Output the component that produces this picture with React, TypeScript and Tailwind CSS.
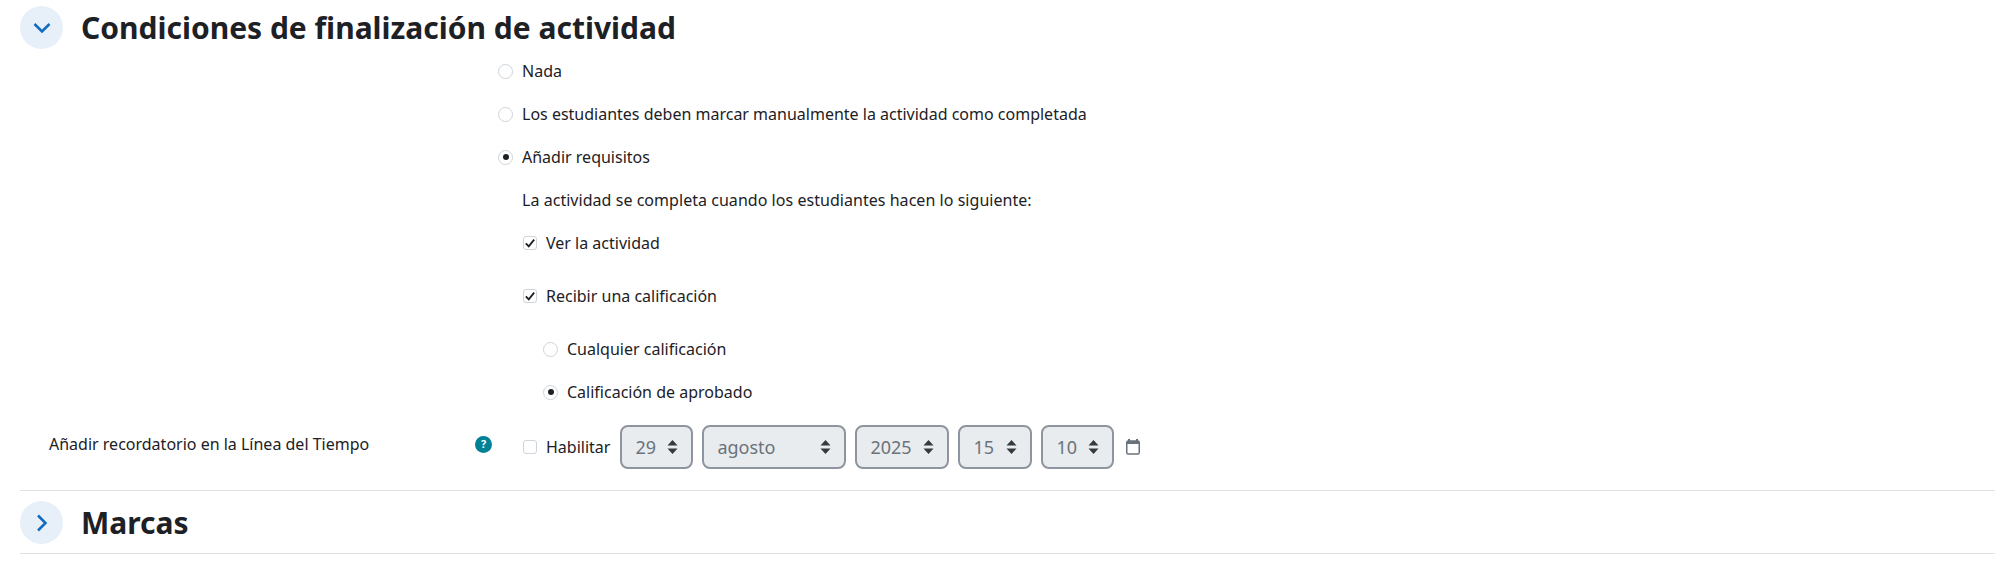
function Radio({ checked, label }: { checked?: boolean; label: string }) {
  return (
    <div className="flex items-center h-6 mb-[19px]">
      <span className="flex items-center justify-center w-[15px] h-[15px] rounded-full bg-white border border-[#ced4da] mr-[9px] shrink-0">
        {checked && <span className="w-[6px] h-[6px] rounded-full bg-[#1d2125]" />}
      </span>
      <span>{label}</span>
    </div>
  );
}

function Check({ checked, label, className }: { checked?: boolean; label: string; className?: string }) {
  return (
    <div className={"flex items-center h-6 " + (className ?? "")}>
      <span className="flex items-center justify-center w-[14px] h-[14px] rounded-[3px] bg-white border border-[#ced4da] mr-[9px] shrink-0">
        {checked && (
          <svg viewBox="0 0 12 12" className="w-[10px] h-[10px]" fill="none" stroke="#1d2125" strokeWidth="2.2">
            <path d="M1 6.5 L4.5 10 L11 2" />
          </svg>
        )}
      </span>
      <span>{label}</span>
    </div>
  );
}

function Select({ value, width }: { value: string; width: string }) {
  return (
    <div className={"flex items-center justify-between h-[44px] rounded-lg border-2 border-[#8f959e] bg-[#e9ecef] text-[#6a737b] pl-[13px] pr-[13px] text-[18px] " + width}>
      <span>{value}</span>
      <svg viewBox="0 0 10 14" className="w-[11px] h-[14px]" fill="#343a40">
        <path d="M5 0 L10 5.5 L0 5.5 Z M0 8.5 L10 8.5 L5 14 Z" />
      </svg>
    </div>
  );
}

function Section({ open, title }: { open?: boolean; title: string }) {
  return (
    <div className="flex items-center h-[43px]">
      <span className="flex items-center justify-center w-[43px] h-[43px] rounded-full bg-[#e7eff9] shrink-0">
        {open ? (
          <svg viewBox="0 0 18 12" className="w-[18px] h-[12px]" fill="none" stroke="#0f6cbf" strokeWidth="2.5">
            <path d="M1.5 2 L9 9.5 L16.5 2" />
          </svg>
        ) : (
          <svg viewBox="0 0 12 18" className="w-[12px] h-[18px]" fill="none" stroke="#0f6cbf" strokeWidth="2.5">
            <path d="M2 1.5 L9.5 9 L2 16.5" />
          </svg>
        )}
      </span>
      <h3 className="ml-[18px] text-[30px] font-bold text-[#1d2125] leading-none">{title}</h3>
    </div>
  );
}

export default function App() {
  return (
    <div className="bg-white h-[567px] pl-5 pr-[5px] pt-[6px] text-[16px] text-[#1d2125] font-['Noto_Sans','Open_Sans',sans-serif] overflow-hidden">
      <Section open title="Condiciones de finalización de actividad" />

      <div className="pl-[478px] mt-[10px]">
        <Radio label="Nada" />
        <Radio label="Los estudiantes deben marcar manualmente la actividad como completada" />
        <Radio checked label="Añadir requisitos" />
        <div className="pl-6 h-6 mb-[19px] tracking-[0.04px]">La actividad se completa cuando los estudiantes hacen lo siguiente:</div>
        <div className="pl-[25px]">
          <Check checked label="Ver la actividad" className="mb-[29px]" />
          <Check checked label="Recibir una calificación" className="mb-[29px]" />
          <div className="pl-[20px]">
            <Radio label="Cualquier calificación" />
            <Radio checked label="Calificación de aprobado" />
          </div>
        </div>
      </div>

      <div className="flex items-center mt-[21px] h-[44px]">
        <div className="w-[455px] pl-[29px] -mt-[6px]">Añadir recordatorio en la Línea del Tiempo</div>
        <span className="flex items-center justify-center w-[17px] h-[17px] rounded-full bg-[#008196] text-white text-[11px] font-bold -mt-[6px]">?</span>
        <div className="flex items-center ml-[31px]">
          <Check label="Habilitar" className="mr-[10px]" />
          <div className="flex items-center gap-[9px]">
            <Select value="29" width="w-[73px]" />
            <Select value="agosto" width="w-[144px]" />
            <Select value="2025" width="w-[94px]" />
            <Select value="15" width="w-[74px]" />
            <Select value="10" width="w-[73px]" />
          </div>
          <svg viewBox="0 0 14 16" className="w-[14px] h-[16px] ml-[12px]" fill="none">
            <path d="M3 0 V3 M11 0 V3" stroke="#6a737b" strokeWidth="2" />
            <rect x="0.75" y="2" width="12.5" height="13" rx="1.5" stroke="#6a737b" strokeWidth="1.5" />
            <rect x="0.75" y="2" width="12.5" height="3" fill="#6a737b" />
          </svg>
        </div>
      </div>

      <div className="border-t border-[#dee2e6] mt-[21px] pt-[10px] pb-[9px]">
        <Section title="Marcas" />
      </div>
      <div className="border-t border-[#dee2e6]" />
    </div>
  );
}
